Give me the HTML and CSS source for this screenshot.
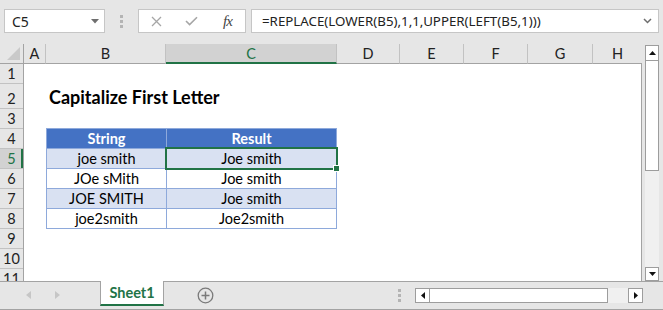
FILE: index.html
```html
<!DOCTYPE html>
<html>
<head>
<meta charset="utf-8">
<link rel="stylesheet" href="styles.css">
</head>
<body>
<div class="app">
  <div class="toolbar">
    <div class="namebox">
      <span class="nb-text">C5</span>
      <svg class="nb-caret" width="8" height="5" viewBox="0 0 8 5"><polygon points="0,0 8,0 4,4.5" fill="#6e6e6e"/></svg>
    </div>
    <div class="grip"><i></i><i></i><i></i></div>
    <div class="fbtns">
      <span class="fbtn"><svg width="11" height="11" viewBox="0 0 11 11"><path d="M1 1 L10 10 M10 1 L1 10" stroke="#a6a6a6" stroke-width="1.3" fill="none"/></svg></span>
      <span class="fbtn"><svg width="13" height="10" viewBox="0 0 13 10"><path d="M1 5 L4.6 8.6 L12 1.2" stroke="#a6a6a6" stroke-width="1.6" fill="none"/></svg></span>
      <span class="fbtn fx">fx</span>
    </div>
    <div class="formula">
      <span class="f-text">=REPLACE(LOWER(B5),1,1,UPPER(LEFT(B5,1)))</span>
      <svg class="f-chev" width="9" height="6" viewBox="0 0 9 6"><path d="M1 1 L4.5 4.5 L8 1" stroke="#6e6e6e" stroke-width="1.5" fill="none"/></svg>
    </div>
  </div>

  <div class="main">
    <div class="sheet">
      <div class="colheads">
        <div class="ch corner"><svg width="13" height="13" viewBox="0 0 13 13"><polygon points="13,0 13,13 0,13" fill="#c9c9c9"/></svg></div>
        <div class="ch w-a">A</div>
        <div class="ch w-b">B</div>
        <div class="ch w-c sel">C</div>
        <div class="ch w-d">D</div>
        <div class="ch w-e">E</div>
        <div class="ch w-f">F</div>
        <div class="ch w-g">G</div>
        <div class="ch w-h last">H</div>
      </div>
      <div class="body">
        <div class="rowheads">
          <div class="rh">1</div>
          <div class="rh tall">2</div>
          <div class="rh">3</div>
          <div class="rh">4</div>
          <div class="rh sel">5</div>
          <div class="rh">6</div>
          <div class="rh">7</div>
          <div class="rh">8</div>
          <div class="rh">9</div>
          <div class="rh">10</div>
          <div class="rh">11</div>
        </div>
        <div class="cells">
          <div class="title">Capitalize First Letter</div>
          <div class="tbl">
            <div class="td hd">String</div>
            <div class="td hd">Result</div>
            <div class="td band">joe smith</div>
            <div class="td band">Joe smith</div>
            <div class="td">JOe sMith</div>
            <div class="td">Joe smith</div>
            <div class="td band">JOE SMITH</div>
            <div class="td band">Joe smith</div>
            <div class="td">joe2smith</div>
            <div class="td">Joe2smith</div>
            <div class="selbox"></div>
            <div class="handle"></div>
          </div>
        </div>
      </div>
    </div>
    <div class="vscroll">
      <div class="sbtn up"><svg width="7" height="4" viewBox="0 0 7 4"><polygon points="0,4 7,4 3.5,0" fill="#111"/></svg></div>
      <div class="vthumb"></div>
      <div class="vtrack"></div>
      <div class="sbtn down"><svg width="7" height="4" viewBox="0 0 7 4"><polygon points="0,0 7,0 3.5,4" fill="#111"/></svg></div>
    </div>
  </div>

  <div class="tabbar">
    <div class="navs">
      <svg width="5" height="8" viewBox="0 0 5 8"><polygon points="5,0 5,8 0,4" fill="#c6c6c6"/></svg>
      <svg width="5" height="8" viewBox="0 0 5 8"><polygon points="0,0 0,8 5,4" fill="#c6c6c6"/></svg>
    </div>
    <div class="tab">Sheet1</div>
    <div class="addsheet"><svg width="17" height="17" viewBox="0 0 17 17"><circle cx="8.5" cy="8.5" r="7.3" stroke="#7a7a7a" stroke-width="1.3" fill="none"/><path d="M8.5 4.5 V12.5 M4.5 8.5 H12.5" stroke="#7a7a7a" stroke-width="1.5"/></svg></div>
    <div class="hgrip"><i></i><i></i><i></i></div>
    <div class="hscroll">
      <div class="sbtn hbtn"><svg width="4" height="7" viewBox="0 0 4 7"><polygon points="4,0 4,7 0,3.5" fill="#111"/></svg></div>
      <div class="hthumb"></div>
      <div class="htrack"></div>
      <div class="sbtn hbtn"><svg width="4" height="7" viewBox="0 0 4 7"><polygon points="0,0 0,7 4,3.5" fill="#111"/></svg></div>
    </div>
  </div>
</div>
</body>
</html>
```

FILE: styles.css
```css
* { box-sizing: border-box; }
html, body { margin: 0; padding: 0; }
body { background: #e6e6e6; font-family: "Lato", "Liberation Sans", sans-serif; }

.app {
  width: 663px;
  height: 310px;
  overflow: hidden;
  display: flex;
  flex-direction: column;
  background: #e6e6e6;
}

/* ---------- toolbar ---------- */
.toolbar {
  height: 44px;
  flex: none;
  display: flex;
  align-items: flex-start;
  padding: 9px 0 0 4px;
  font-family: "Noto Sans", "Open Sans", sans-serif;
}
.namebox {
  width: 101px;
  height: 24px;
  background: #fff;
  border: 1px solid #c6c6c6;
  display: flex;
  align-items: center;
  justify-content: space-between;
  padding: 0 5px 0 7px;
}
.nb-text { font-size: 14px; color: #222; }
.grip {
  margin-left: 15px;
  width: 3px;
  height: 24px;
  display: flex;
  flex-direction: column;
  justify-content: center;
  gap: 2px;
}
.grip i, .hgrip i { display: block; width: 3px; height: 3px; background: #b4b4b4; }
.fbtns {
  margin-left: 15px;
  width: 108px;
  height: 24px;
  background: #fff;
  border: 1px solid #c6c6c6;
  display: flex;
  align-items: center;
}
.fbtn {
  width: 35px;
  display: flex;
  justify-content: center;
  align-items: center;
}
.fx {
  font-family: "Liberation Serif", serif;
  font-style: italic;
  font-size: 15px;
  color: #444;
  letter-spacing: -1px;
  padding-left: 2px;
}
.formula {
  margin-left: 5px;
  width: 408px;
  height: 24px;
  background: #fff;
  border: 1px solid #c6c6c6;
  display: flex;
  align-items: center;
  justify-content: space-between;
  padding: 0 6px 0 10px;
}
.f-text { font-size: 13.3px; color: #222; white-space: nowrap; }

/* ---------- sheet ---------- */
.main {
  height: 237px;
  flex: none;
  display: flex;
}
.sheet {
  width: 642px;
  display: flex;
  flex-direction: column;
  overflow: hidden;
}
.colheads {
  display: flex;
  height: 20px;
  flex: none;
}
.ch {
  height: 20px;
  border-right: 1px solid #c2c2c2;
  border-bottom: 1px solid #a3a3a3;
  font-size: 14.5px;
  line-height: 19px;
  text-align: center;
  color: #222;
  background: #e6e6e6;
}
.ch.corner { width: 24px; border-right-color: #a3a3a3; display: flex; align-items: flex-end; justify-content: flex-end; padding: 0 3px 3px 0; }
.w-a { width: 22px; }
.w-b { width: 120px; }
.w-c { width: 171px; }
.w-d { width: 63px; }
.w-e { width: 64px; }
.w-f { width: 64px; }
.w-g { width: 65px; }
.w-h { width: 49px; }
.ch.last { border-right: none; }
.ch.sel {
  background: #d2d2d2;
  color: #217346;
  border-bottom: 2px solid #217346;
}

.body {
  display: flex;
  flex: 1;
  min-height: 0;
}
.rowheads {
  width: 24px;
  flex: none;
  border-right: 1px solid #a3a3a3;
  display: flex;
  flex-direction: column;
}
.rh {
  flex: none;
  height: 20px;
  border-bottom: 1px solid #c2c2c2;
  display: flex;
  align-items: flex-end;
  justify-content: center;
  font-size: 14.5px;
  line-height: 19px;
  color: #222;
}
.rh.tall { height: 25px; }
.rh.sel {
  background: #d2d2d2;
  color: #217346;
  box-shadow: inset -2px 0 0 #217346;
}

.cells {
  flex: 1;
  background: #fff;
  border-right: 1px solid #a3a3a3;
  padding: 20px 0 0 22px;
}
.title {
  height: 25px;
  margin-bottom: 19px;
  padding-left: 3px;
  font-weight: 700;
  font-size: 18px;
  line-height: 26px;
  color: #000;
}

.tbl {
  position: relative;
  width: 291px;
  display: grid;
  grid-template-columns: 120px 170px;
  grid-auto-rows: 20px;
  border-left: 1px solid #8ea9db;
  border-top: 1px solid #8ea9db;
}
.td {
  border-right: 1px solid #8ea9db;
  border-bottom: 1px solid #8ea9db;
  text-align: center;
  font-size: 14.5px;
  line-height: 19px;
  color: #000;
  background: #fff;
}
.td.hd { background: #4472c4; color: #fff; font-weight: 700; }
.td.band { background: #d9e1f2; }
.selbox {
  position: absolute;
  left: 118px;
  top: 18px;
  width: 173px;
  height: 23px;
  border: 2px solid #217346;
}
.handle {
  position: absolute;
  left: 286px;
  top: 36px;
  width: 7px;
  height: 7px;
  background: #217346;
  border: 1px solid #fff;
}

/* ---------- vertical scroll ---------- */
.vscroll {
  width: 21px;
  flex: none;
  display: flex;
  flex-direction: column;
  padding: 1px 4px 0 3px;
}
.sbtn {
  background: #fff;
  border: 1px solid #9d9d9d;
  display: flex;
  align-items: center;
  justify-content: center;
  flex: none;
}
.sbtn.up { height: 16px; }
.sbtn.down { height: 14px; }
.vthumb {
  height: 110px;
  flex: none;
  background: #fff;
  border: 1px solid #9d9d9d;
  border-top: none;
}
.vtrack { flex: 1; background: #f0f0f0; }

/* ---------- tab bar ---------- */
.tabbar {
  flex: 1;
  display: flex;
  align-items: flex-start;
  border-top: 1px solid #a3a3a3;
  border-bottom: 1px solid #a3a3a3;
  margin-bottom: 0;
  height: 29px;
}
.navs {
  width: 100px;
  display: flex;
  gap: 24px;
  padding: 9px 0 0 26px;
}
.tab {
  width: 64px;
  height: 25px;
  margin-top: -1px;
  background: #fff;
  border-left: 1px solid #a3a3a3;
  border-right: 1px solid #a3a3a3;
  border-bottom: 2px solid #217346;
  color: #217346;
  font-weight: 700;
  font-size: 14.5px;
  line-height: 24px;
  text-align: center;
}
.addsheet {
  margin: 5px 0 0 33px;
  width: 17px;
  height: 17px;
}
.hgrip {
  margin: 7px 0 0 184px;
  display: flex;
  flex-direction: column;
  gap: 2px;
}
.hscroll {
  margin: 6px 0 0 14px;
  width: 228px;
  height: 15px;
  display: flex;
}
.hbtn { width: 15px; height: 15px; }
.hthumb {
  width: 178px;
  background: #fff;
  border: 1px solid #9d9d9d;
  border-left: none;
}
.htrack { flex: 1; background: #f0f0f0; }
```
